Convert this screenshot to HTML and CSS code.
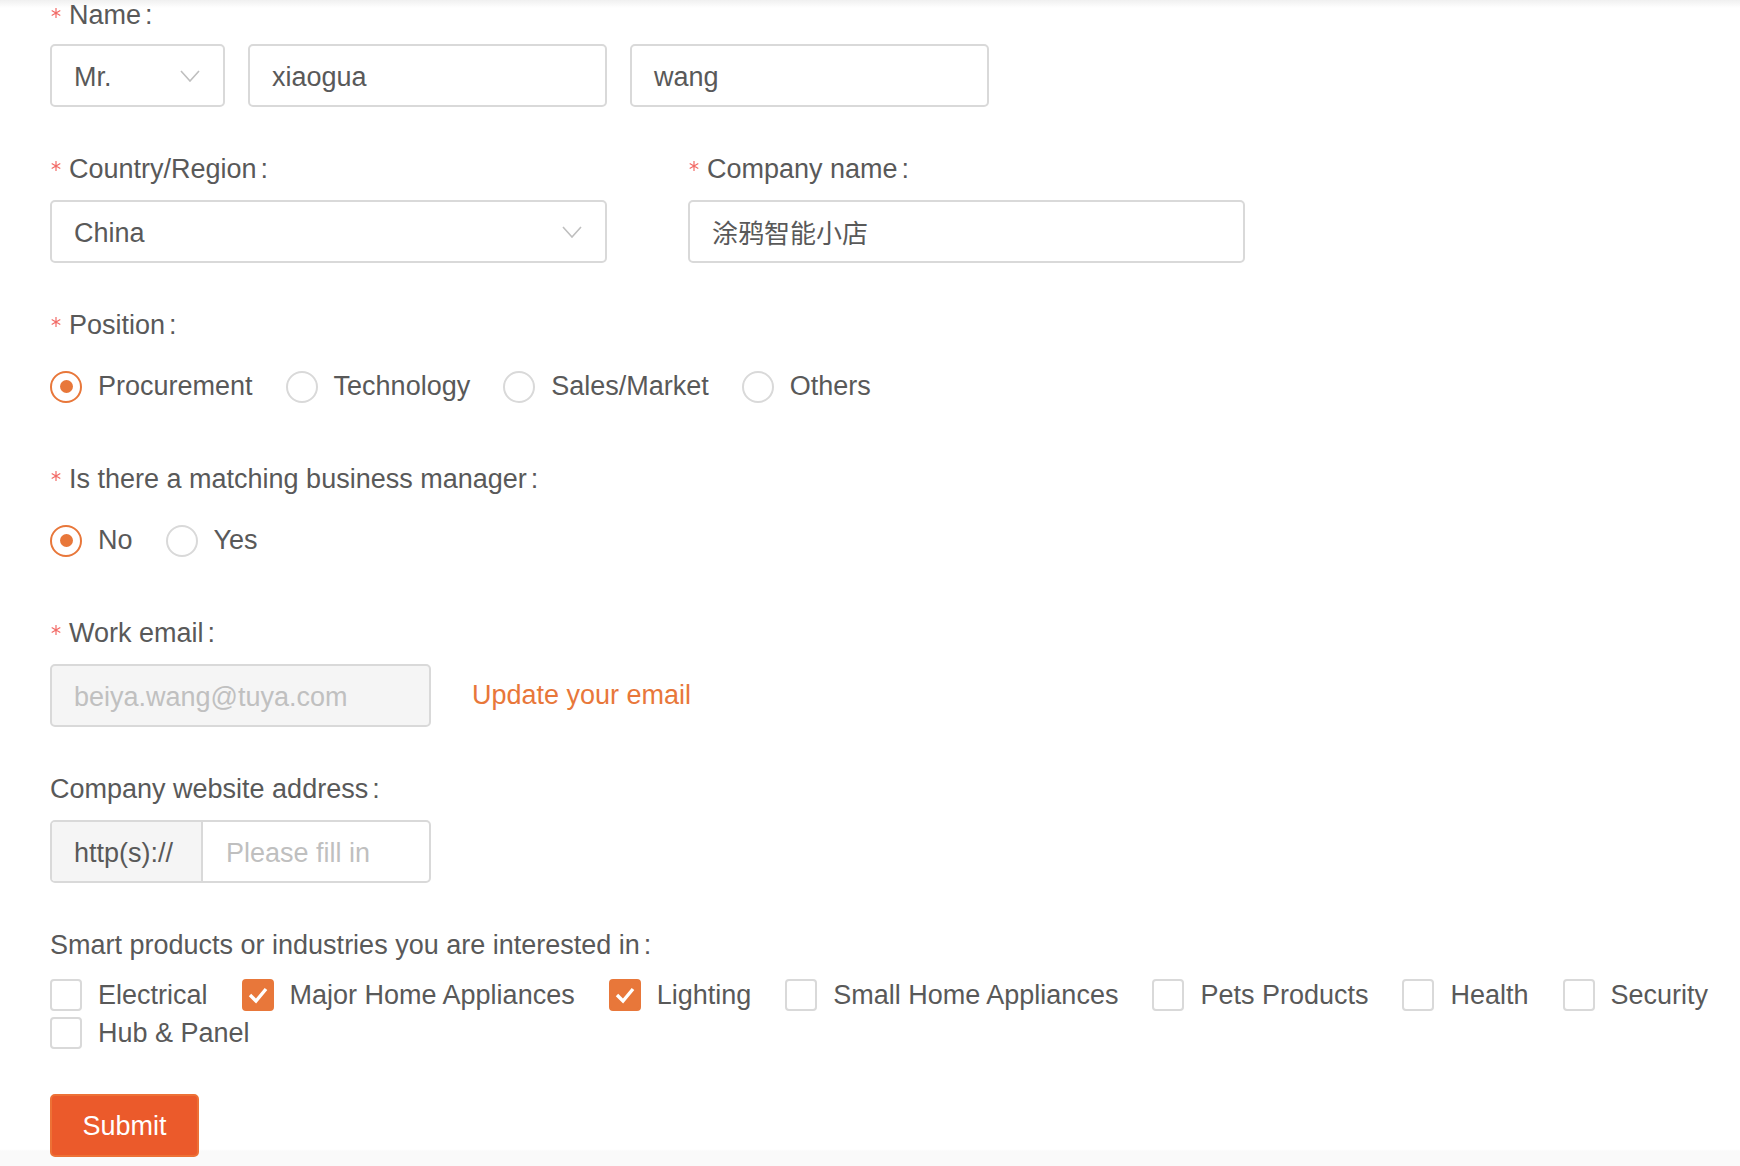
FILE: index.html
```html
<!DOCTYPE html>
<html lang="en">
<head>
<meta charset="utf-8">
<title>Form</title>
<link rel="stylesheet" href="styles.css">
</head>
<body>
<div class="page">
  <form class="form">
    <div class="item">
      <div class="label label-top"><svg class="req" viewBox="0 0 10 10"><path d="M5 0V10M0.7 2.5L9.3 7.5M0.7 7.5L9.3 2.5"/></svg>Name<span class="colon">:</span></div>
      <div class="row">
        <div class="field select w-title"><span>Mr.</span><svg class="chev" viewBox="0 0 20 12"><polyline points="1,1 10,11 19,1"/></svg></div>
        <div class="field w-name">xiaogua</div>
        <div class="field w-name">wang</div>
      </div>
    </div>

    <div class="pair">
      <div class="item">
        <div class="label"><svg class="req" viewBox="0 0 10 10"><path d="M5 0V10M0.7 2.5L9.3 7.5M0.7 7.5L9.3 2.5"/></svg>Country/Region<span class="colon">:</span></div>
        <div class="field select w-wide"><span>China</span><svg class="chev" viewBox="0 0 20 12"><polyline points="1,1 10,11 19,1"/></svg></div>
      </div>
      <div class="item">
        <div class="label"><svg class="req" viewBox="0 0 10 10"><path d="M5 0V10M0.7 2.5L9.3 7.5M0.7 7.5L9.3 2.5"/></svg>Company name<span class="colon">:</span></div>
        <div class="field w-wide cjk">涂鸦智能小店</div>
      </div>
    </div>

    <div class="item">
      <div class="label"><svg class="req" viewBox="0 0 10 10"><path d="M5 0V10M0.7 2.5L9.3 7.5M0.7 7.5L9.3 2.5"/></svg>Position<span class="colon">:</span></div>
      <div class="radio-group">
        <div class="radio checked"><span class="radio-dot"></span>Procurement</div>
        <div class="radio"><span class="radio-dot"></span>Technology</div>
        <div class="radio"><span class="radio-dot"></span>Sales/Market</div>
        <div class="radio"><span class="radio-dot"></span>Others</div>
      </div>
    </div>

    <div class="item">
      <div class="label"><svg class="req" viewBox="0 0 10 10"><path d="M5 0V10M0.7 2.5L9.3 7.5M0.7 7.5L9.3 2.5"/></svg>Is there a matching business manager<span class="colon">:</span></div>
      <div class="radio-group">
        <div class="radio checked"><span class="radio-dot"></span>No</div>
        <div class="radio"><span class="radio-dot"></span>Yes</div>
      </div>
    </div>

    <div class="item">
      <div class="label"><svg class="req" viewBox="0 0 10 10"><path d="M5 0V10M0.7 2.5L9.3 7.5M0.7 7.5L9.3 2.5"/></svg>Work email<span class="colon">:</span></div>
      <div class="email-row">
        <div class="field w-email disabled">beiya.wang@tuya.com</div>
        <span class="link">Update your email</span>
      </div>
    </div>

    <div class="item">
      <div class="label">Company website address<span class="colon">:</span></div>
      <div class="addon-group">
        <div class="addon">http(s)://</div>
        <div class="addon-input">Please fill in</div>
      </div>
    </div>

    <div class="item">
      <div class="label">Smart products or industries you are interested in<span class="colon">:</span></div>
      <div class="check-group">
        <div class="check"><span class="box"></span>Electrical</div>
        <div class="check checked"><span class="box"><svg viewBox="0 0 28 28"><polyline points="6,14 12,20 22,8"/></svg></span>Major Home Appliances</div>
        <div class="check checked"><span class="box"><svg viewBox="0 0 28 28"><polyline points="6,14 12,20 22,8"/></svg></span>Lighting</div>
        <div class="check"><span class="box"></span>Small Home Appliances</div>
        <div class="check"><span class="box"></span>Pets Products</div>
        <div class="check"><span class="box"></span>Health</div>
        <div class="check"><span class="box"></span>Security</div>
        <div class="check"><span class="box"></span>Hub &amp; Panel</div>
      </div>
    </div>

    <button type="button" class="submit">Submit</button>
  </form>
</div>
</body>
</html>
```

FILE: styles.css
```css
html, body {
  margin: 0;
  padding: 0;
}

body {
  font-family: "Liberation Sans", Arial, "Noto Sans CJK SC", sans-serif;
  font-size: 27px;
  color: #595959;
  background: #ffffff;
}

.page {
  display: flow-root;
  box-sizing: border-box;
  min-height: 1166px;
  overflow: hidden;
  background: linear-gradient(to bottom, #f0f0f0 0px, #ffffff 8px, #ffffff 1149px, #fafafa 1151px, #fafafa 100%);
}

.form {
  margin: 0 0 0 50px;
}

.item {
  margin-bottom: 42px;
}

.label {
  display: flex;
  align-items: center;
  height: 40px;
  margin-bottom: 11px;
  white-space: nowrap;
}

.label-top {
  height: 31px;
  margin-bottom: 13px;
}

.req {
  display: block;
  width: 10px;
  height: 10px;
  margin: -6px 8px 0 1px;
  fill: none;
  stroke: #f26a66;
  stroke-width: 1.2;
}

.colon {
  margin-left: 4px;
}

.row {
  display: flex;
  gap: 23px;
}

.pair {
  display: flex;
  gap: 81px;
}

.field {
  box-sizing: border-box;
  height: 63px;
  border: 2px solid #d9d9d9;
  border-radius: 5px;
  padding: 3px 22px 0;
  display: flex;
  align-items: center;
  background: #ffffff;
  white-space: nowrap;
}

.cjk {
  font-family: "Noto Sans CJK SC", sans-serif;
  font-size: 26px;
  padding-top: 0;
}

.select {
  justify-content: space-between;
  padding-right: 23px;
}

.chev {
  width: 20px;
  height: 12px;
  margin-top: -3px;
  fill: none;
  stroke: #bfbfbf;
  stroke-width: 1.6;
}

.w-title { width: 175px; }
.w-name { width: 359px; }
.w-wide { width: 557px; }
.w-email { width: 381px; }

.disabled {
  background: #f5f5f5;
  color: #c0c0c0;
}

.email-row {
  display: flex;
  align-items: center;
}

.link {
  color: #e8773a;
  margin-left: 41px;
}

.addon-group {
  display: flex;
  box-sizing: border-box;
  width: 381px;
  height: 63px;
  border: 2px solid #d9d9d9;
  border-radius: 5px;
  overflow: hidden;
}

.addon {
  box-sizing: border-box;
  width: 151px;
  padding: 3px 0 0 22px;
  background: #f5f5f5;
  border-right: 2px solid #d9d9d9;
  display: flex;
  align-items: center;
}

.addon-input {
  padding: 3px 0 0 23px;
  color: #bfbfbf;
  display: flex;
  align-items: center;
}

.radio-group {
  display: flex;
  align-items: center;
  height: 61px;
  gap: 33px;
}

.radio {
  display: flex;
  align-items: center;
  gap: 16px;
  white-space: nowrap;
}

.radio-dot {
  box-sizing: border-box;
  width: 32px;
  height: 32px;
  border: 2px solid #d9d9d9;
  border-radius: 50%;
  display: flex;
  align-items: center;
  justify-content: center;
}

.radio.checked .radio-dot {
  border-color: #e8773a;
}

.radio.checked .radio-dot::after {
  content: "";
  width: 13px;
  height: 13px;
  border-radius: 50%;
  background: #e8773a;
}

.check-group {
  display: flex;
  flex-wrap: wrap;
  column-gap: 34px;
}

.check {
  display: flex;
  align-items: center;
  gap: 16px;
  height: 38px;
  white-space: nowrap;
}

.box {
  box-sizing: border-box;
  width: 32px;
  height: 32px;
  border: 2px solid #d9d9d9;
  border-radius: 4px;
  display: flex;
}

.box svg {
  width: 28px;
  height: 28px;
  fill: none;
  stroke: #ffffff;
  stroke-width: 3.4;
}

.check.checked .box {
  background: #e8773a;
  border-color: #e8773a;
}

.submit {
  box-sizing: border-box;
  width: 149px;
  height: 63px;
  padding: 2px 0 0;
  background: #eb5a2b;
  border: 2px solid #ed7136;
  border-radius: 5px;
  color: #ffffff;
  font-family: inherit;
  font-size: 27px;
  cursor: pointer;
}
```
